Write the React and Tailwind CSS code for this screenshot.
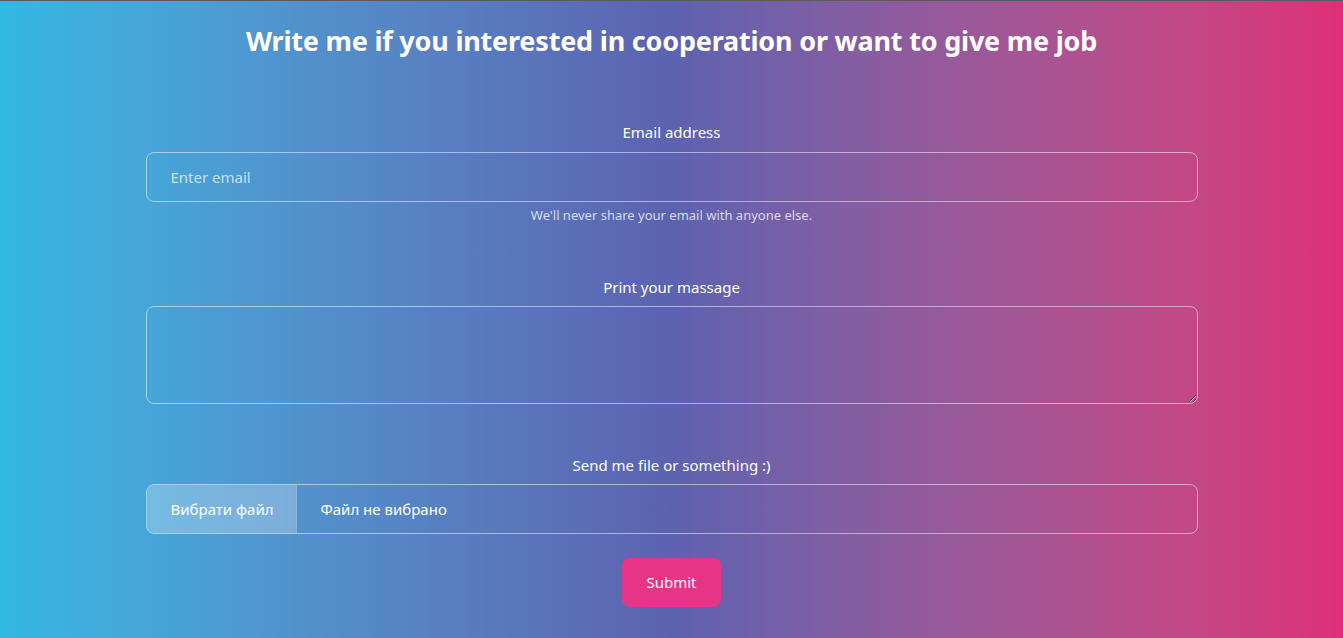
export default function App() {
  return (
    <div
      className="min-h-[638px] w-full border-t border-[#5a5a5a] bg-linear-to-r from-[#33b8e4] via-[#5c62b0] to-[#dd2f78] text-white"
      style={{ fontFamily: '"Noto Sans", "Open Sans", sans-serif' }}
    >
      <div className="flex flex-col items-center">
        <h1 className="mt-[20px] h-[40px] text-[27px] leading-[40px] font-bold tracking-[-0.2px] whitespace-nowrap">
          Write me if you interested in cooperation or want to give me job
        </h1>
        <form className="mt-[60px] flex w-[1052px] flex-col items-center">
          <label className="h-[22px] text-[15px] leading-[22px]">Email address</label>
          <input
            type="email"
            placeholder="Enter email"
            className="mt-[9px] h-[50px] w-full rounded-[8px] border border-white/50 bg-transparent px-[24px] text-[15px] text-white outline-none placeholder:text-white/70"
          />
          <div className="mt-[4px] h-[18px] text-[13px] leading-[18px] text-white/75">
            We'll never share your email with anyone else.
          </div>
          <label className="mt-[52px] h-[22px] text-[15px] leading-[22px]">Print your massage</label>
          <textarea className="mt-[8px] h-[98px] w-full rounded-[8px] border border-white/50 bg-transparent px-[24px] py-[12px] text-[15px] text-white outline-none" />
          <label className="mt-[50px] h-[22px] text-[15px] leading-[22px]">Send me file or something :)</label>
          <div className="mt-[8px] flex h-[50px] w-full overflow-hidden rounded-[8px] border border-white/50 text-[15px]">
            <div className="flex w-[150px] shrink-0 items-center border-r border-white/10 bg-white/25 px-[24px] whitespace-nowrap">
              Вибрати файл
            </div>
            <div className="flex items-center px-[24px] whitespace-nowrap">Файл не вибрано</div>
          </div>
          <button
            type="button"
            className="mt-[24px] h-[49px] w-[99px] rounded-[8px] bg-[#e83487] text-[15px] text-white"
          >
            Submit
          </button>
        </form>
      </div>
    </div>
  );
}
